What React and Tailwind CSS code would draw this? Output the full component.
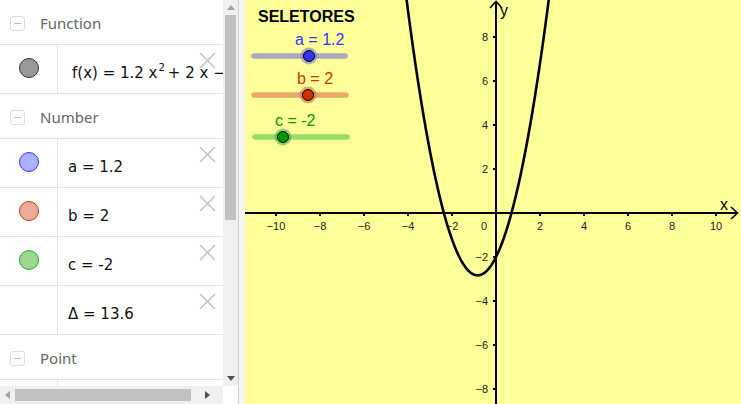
import React from 'react';

const rows = [
  { type: 'header', label: 'Function' },
  { type: 'item', fill: '#999999', stroke: '#333333', pad: 'pl-[14px]', text: (<>f(x) = 1.2 x<span className="text-[10px] relative -top-[6px] ml-[1px] mr-[3px]">2</span>+ 2 x − 2</>) },
  { type: 'header', label: 'Number' },
  { type: 'item', fill: '#aab0ff', stroke: '#3333ff', text: 'a = 1.2' },
  { type: 'item', fill: '#eaad9a', stroke: '#cc3300', text: 'b = 2' },
  { type: 'item', fill: '#9bd890', stroke: '#22aa22', text: 'c = -2' },
  { type: 'item', text: 'Δ = 13.6' },
  { type: 'header', label: 'Point' },
  { type: 'item', fill: '#666666', stroke: '#333333', text: '' },
];

function DeleteIcon() {
  return (
    <svg className="absolute right-[7px] top-[7px] w-[17px] h-[17px]" viewBox="0 0 17 17">
      <path d="M1 1 L16 16 M16 1 L1 16" stroke="#c4c4c4" strokeWidth="1.6" fill="none" />
    </svg>
  );
}

function Header({ label }) {
  return (
    <div className="h-[45px] shrink-0 flex items-center border-b border-[#e2e2e2] pl-[10px] pt-[3px]">
      <div className="w-[15px] h-[15px] rounded-[3px] border border-[#dcdcdc] flex items-center justify-center">
        <div className="w-[7px] h-[1.5px] bg-[#bdbdbd]" />
      </div>
      <span className="ml-[15px] text-[15px] text-[#666] font-['Noto_Sans',sans-serif]">{label}</span>
    </div>
  );
}

function Item({ fill, stroke, text, pad }) {
  return (
    <div className="h-[49px] shrink-0 flex border-b border-[#e2e2e2]">
      <div className="w-[58px] shrink-0 border-r border-[#e2e2e2] flex items-center justify-center pb-[3px]">
        {fill && (
          <div className="w-[20px] h-[20px] rounded-full border" style={{ background: fill, borderColor: stroke }} />
        )}
      </div>
      <div className={`relative flex-1 flex items-center pt-[8px] whitespace-nowrap overflow-hidden text-[15px] text-[#111] font-['DejaVu_Sans',sans-serif] ${pad || 'pl-[10px]'}`}>
        {text}
        <DeleteIcon />
      </div>
    </div>
  );
}

function Tri({ dir, color }) {
  const d = {
    up: 'M0 5 L4 0 L8 5 Z',
    down: 'M0 0 L8 0 L4 5 Z',
    left: 'M5 0 L5 8 L0 4 Z',
    right: 'M0 0 L0 8 L5 4 Z',
  }[dir];
  const box = dir === 'up' || dir === 'down' ? 'w-[8px] h-[5px]' : 'w-[5px] h-[8px]';
  const vb = dir === 'up' || dir === 'down' ? '0 0 8 5' : '0 0 5 8';
  return (
    <svg className={box} viewBox={vb}>
      <path d={d} fill={color} />
    </svg>
  );
}

function AlgebraView() {
  return (
    <div className="w-[238px] h-full flex flex-col bg-white">
      <div className="flex h-[386px]">
        <div className="w-[223px] flex flex-col overflow-hidden">
          {rows.map((r, i) =>
            r.type === 'header' ? <Header key={i} label={r.label} /> : <Item key={i} {...r} />
          )}
        </div>
        <div className="w-[15px] bg-[#f0f0f0] flex flex-col items-center">
          <div className="h-[15px] flex items-center justify-center"><Tri dir="up" color="#a3a3a3" /></div>
          <div className="w-[11px] h-[205px] bg-[#c1c1c1]" />
          <div className="flex-1" />
          <div className="h-[15px] flex items-center justify-center"><Tri dir="down" color="#505050" /></div>
        </div>
      </div>
      <div className="flex flex-1">
        <div className="w-[223px] bg-[#f0f0f0] flex items-center">
          <div className="w-[15px] flex justify-center"><Tri dir="left" color="#a3a3a3" /></div>
          <div className="w-[176px] h-[12px] bg-[#c1c1c1]" />
          <div className="flex-1 flex justify-center"><Tri dir="right" color="#505050" /></div>
        </div>
        <div className="flex-1 bg-white" />
      </div>
    </div>
  );
}

function Slider({ y, x1, x2, track, knob, halo, tx, label, color, thumb }) {
  return (
    <g>
      <text x={tx} y={y - 11} fill={color} fontSize="16">{label}</text>
      <line x1={x1} y1={y} x2={x2} y2={y} stroke={track} strokeWidth="5.5" strokeLinecap="round" />
      <circle cx={thumb} cy={y} r="8.5" fill={halo} opacity="0.55" />
      <circle cx={thumb} cy={y} r="5.5" fill={knob} stroke="#000" strokeWidth="1" />
    </g>
  );
}

function Graph() {
  const ox = 251;
  const oy = 213;
  const s = 22;
  const pts = [];
  for (let x = -4.2; x <= 2.5; x += 0.05) {
    const y = 1.2 * x * x + 2 * x - 2;
    pts.push(`${(ox + x * s).toFixed(2)},${(oy - y * s).toFixed(2)}`);
  }
  const xt = [-10, -8, -6, -4, -2, 2, 4, 6, 8, 10];
  const yt = [8, 6, 4, 2, -2, -4, -6, -8];
  const lbl = (n) => (n < 0 ? `−${-n}` : `${n}`);

  return (
    <div className="flex-1 h-full bg-[#ffff99] overflow-hidden">
      <svg width="496" height="404" viewBox="0 0 496 404" className="font-['Liberation_Sans',Arial,sans-serif]">
        {/* axes */}
        <line x1="0" y1={oy} x2="492" y2={oy} stroke="#000" strokeWidth="2" />
        <path d="M486 207 L492.5 213 L486 219" stroke="#000" strokeWidth="1.6" fill="none" />
        <line x1={ox} y1="1" x2={ox} y2="404" stroke="#000" strokeWidth="2" />
        <path d={`M${ox - 6} 8 L${ox} 1.5 L${ox + 6} 8`} stroke="#000" strokeWidth="1.6" fill="none" />
        <text x="475" y="210" fontSize="16" fill="#000">x</text>
        <text x="255" y="16" fontSize="16" fill="#000">y</text>

        {xt.map((n) => (
          <g key={n}>
            <line x1={ox + n * s} y1={oy} x2={ox + n * s} y2={oy + 3} stroke="#000" strokeWidth="2" />
            <text x={ox + n * s} y={oy + 17} fontSize="11" fill="#222" textAnchor="middle">{lbl(n)}</text>
          </g>
        ))}
        <text x={ox - 12} y={oy + 17} fontSize="11" fill="#222" textAnchor="middle">0</text>
        {yt.map((n) => (
          <g key={n}>
            <line x1={ox - 3} y1={oy - n * s} x2={ox} y2={oy - n * s} stroke="#000" strokeWidth="2" />
            <text x={ox - 8} y={oy - n * s + 4} fontSize="11" fill="#222" textAnchor="end">{lbl(n)}</text>
          </g>
        ))}

        {/* curve */}
        <polyline points={pts.join(' ')} fill="none" stroke="#000" strokeWidth="2.6" strokeLinejoin="round" />

        {/* sliders */}
        <text x="13" y="22" fontSize="16" fontWeight="bold" fill="#000">SELETORES</text>
        <Slider y={56} x1={9} x2={100} track="#a9a9bd" knob="#3333ff" halo="#7777cc" tx={50} label="a = 1.2" color="#3333ff" thumb={64} />
        <Slider y={95} x1={9} x2={101} track="#e8a868" knob="#cc3300" halo="#cc6633" tx={52} label="b = 2" color="#cc3300" thumb={63} />
        <Slider y={137} x1={10} x2={102} track="#99dd66" knob="#009900" halo="#44aa33" tx={30} label="c = -2" color="#009900" thumb={38} />
      </svg>
    </div>
  );
}

export default function App() {
  return (
    <div className="w-[741px] h-[404px] flex overflow-hidden bg-white">
      <AlgebraView />
      <div className="w-[7px] h-full border-l border-[#cfcfcf] bg-[#f6f6f6]" />
      <Graph />
    </div>
  );
}
